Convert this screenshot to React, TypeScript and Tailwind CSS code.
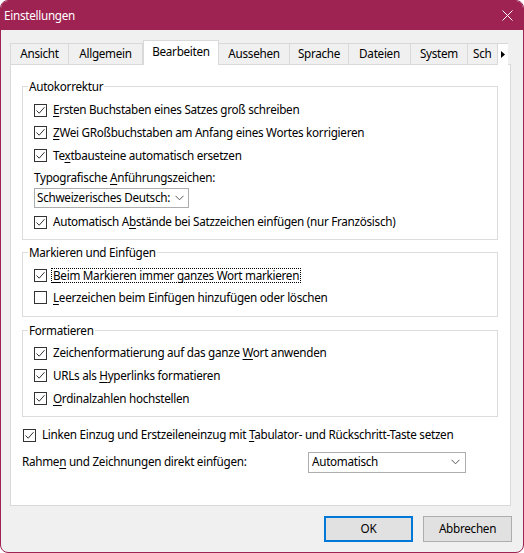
import React from 'react'

// Einstellungen dialog, tab "Bearbeiten"

const TABS = ['Ansicht', 'Allgemein', 'Bearbeiten', 'Aussehen', 'Sprache', 'Dateien', 'System']
const TAB_W: Record<string, string> = {
  Ansicht: 'w-[59px]',
  Allgemein: 'w-[74px]',
  Bearbeiten: 'w-[76px]',
  Aussehen: 'w-[71px]',
  Sprache: 'w-[59px]',
  Dateien: 'w-[62px]',
  System: 'w-[57px]',
}

function Check({ checked }: { checked: boolean }) {
  return (
    <span className="w-[13px] h-[13px] shrink-0 border border-[#333333] bg-white flex items-center justify-center">
      {checked && (
        <svg width="11" height="11" viewBox="0 0 11 11">
          <path d="M1.5 5.5 L4.2 8.2 L9.5 2.2" fill="none" stroke="#333333" strokeWidth="1" />
        </svg>
      )}
    </span>
  )
}

// label text with one underlined access key
function Label({ pre, u, post }: { pre?: string; u: string; post?: string }) {
  return (
    <span className="whitespace-nowrap">
      {pre}
      <span className="underline underline-offset-2">{u}</span>
      {post}
    </span>
  )
}

function CheckRow({ checked, children, h = 'h-[23px]', focus }: { checked: boolean; children: React.ReactNode; h?: string; focus?: boolean }) {
  return (
    <div className={`flex items-center gap-[6px] ${h}`}>
      <Check checked={checked} />
      <span className={focus ? 'outline outline-1 outline-dotted outline-black px-[1px] -ml-[1px] leading-[13px]' : ''}>{children}</span>
    </div>
  )
}

function Chevron() {
  return (
    <svg width="9" height="6" viewBox="0 0 9 6" className="shrink-0">
      <path d="M0.5 0.8 L4.5 4.8 L8.5 0.8" fill="none" stroke="#555555" strokeWidth="1" />
    </svg>
  )
}

function Group({ title, children, className = '' }: { title: string; children: React.ReactNode; className?: string }) {
  return (
    <fieldset className={`border border-[#dcdcdc] ${className}`}>
      <legend className="ml-[5px] px-[1px] leading-[16px]">{title}</legend>
      <div className="pl-[11px] pt-[4px]">{children}</div>
    </fieldset>
  )
}

export default function App() {
  return (
    <div className="w-[524px] h-[553px] bg-[#f0f0f0] border border-[#9e2352] rounded-[8px] overflow-hidden flex flex-col text-[11.7px] text-black font-['Noto_Sans',sans-serif] tracking-[-0.28px]">
      {/* title bar */}
      <div className="h-[29px] shrink-0 bg-[#9e2352] text-white flex items-center justify-between pl-[3px] pr-[10px]">
        <span className="pt-[1px]">Einstellungen</span>
        <svg width="11" height="11" viewBox="0 0 11 11">
          <path d="M0.5 0.5 L10.5 10.5 M10.5 0.5 L0.5 10.5" stroke="white" strokeWidth="1" />
        </svg>
      </div>

      <div className="flex flex-col pl-[9px] pr-[12px]">
        {/* tab strip */}
        <div className="relative z-10 flex items-end h-[24px] mt-[11px] -mb-px">
          {TABS.map((t) =>
            t === 'Bearbeiten' ? (
              <div key={t} className={`${TAB_W[t]} h-[25px] bg-white border border-b-0 border-[#d9d9d9] flex justify-center pt-[2px]`}>
                {t}
              </div>
            ) : (
              <div key={t} className={`${TAB_W[t]} h-[22px] bg-[#f0f0f0] border border-l-0 first:border-l border-[#d9d9d9] flex items-center justify-center pb-[1px]`}>
                {t}
              </div>
            )
          )}
          <div className="w-[30px] h-[22px] border border-l-0 border-[#d9d9d9] flex items-center pl-[5px] pb-[1px] overflow-hidden">
            Sch
          </div>
          <div className="w-[10px] h-[22px] bg-white flex items-center justify-center border-t border-[#d9d9d9]">
            <svg width="4" height="7" viewBox="0 0 4 7">
              <path d="M0 0 L4 3.5 L0 7 Z" fill="#000" />
            </svg>
          </div>
        </div>

        {/* panel */}
        <div className="h-[442px] bg-white border border-[#d9d9d9] pl-[11px] pr-[12px] pt-[13px]">
          <Group title="Autokorrektur" className="pb-[3px]">
            <div className="pt-[1px]" />
            <CheckRow checked h="h-[22px]"><Label u="E" post="rsten Buchstaben eines Satzes groß schreiben" /></CheckRow>
            <CheckRow checked><Label u="Z" post="Wei GRoßbuchstaben am Anfang eines Wortes korrigieren" /></CheckRow>
            <CheckRow checked><Label pre="Te" u="x" post="tbausteine automatisch ersetzen" /></CheckRow>
            <div className="h-[21px] flex items-center">
              <Label pre="Typografische " u="A" post="nführungszeichen:" />
            </div>
            <div className="w-[155px] h-[20px] border border-[#adadad] flex items-center justify-between pl-[2px] pr-[4px]">
              <span className="whitespace-nowrap">Schweizerisches Deutsch:</span>
              <Chevron />
            </div>
            <CheckRow checked h="h-[28px]"><Label pre="Automatisch A" u="b" post="stände bei Satzzeichen einfügen (nur Französisch)" /></CheckRow>
          </Group>

          <Group title="Markieren und Einfügen" className="mt-[4px] pb-[7px]">
            <CheckRow checked h="h-[22px]" focus><Label u="B" post="eim Markieren immer ganzes Wort markieren" /></CheckRow>
            <CheckRow checked={false}><Label u="L" post="eerzeichen beim Einfügen hinzufügen oder löschen" /></CheckRow>
          </Group>

          <Group title="Formatieren" className="mt-[5px] pb-[6px]">
            <CheckRow checked h="h-[22px]"><Label pre="Zeichenformatierung auf das ganze " u="W" post="ort anwenden" /></CheckRow>
            <CheckRow checked><Label pre="URLs als " u="H" post="yperlinks formatieren" /></CheckRow>
            <CheckRow checked><Label u="O" post="rdinalzahlen hochstellen" /></CheckRow>
          </Group>

          <div className="mt-[7px] ml-[1px]">
            <CheckRow checked h="h-[22px]"><Label pre="Linken Einzug und Erstzeileneinzug mit " u="T" post="abulator- und Rückschritt-Taste setzen" /></CheckRow>
          </div>

          <div className="mt-[5px] h-[22px] flex items-center">
            <span className="w-[286px]"><Label pre="Rahme" u="n" post=" und Zeichnungen direkt einfügen:" /></span>
            <div className="w-[158px] h-[21px] border border-[#adadad] flex items-center justify-between pl-[3px] pr-[5px]">
              <span>Automatisch</span>
              <Chevron />
            </div>
          </div>
        </div>

        {/* buttons */}
        <div className="flex justify-end gap-[10px] mt-[10px] -mr-px">
          <button className="w-[89px] h-[26px] bg-[#e1e1e1] border-2 border-[#0078d7]">OK</button>
          <button className="w-[89px] h-[26px] bg-[#e1e1e1] border border-[#adadad]">Abbrechen</button>
        </div>
      </div>
    </div>
  )
}
